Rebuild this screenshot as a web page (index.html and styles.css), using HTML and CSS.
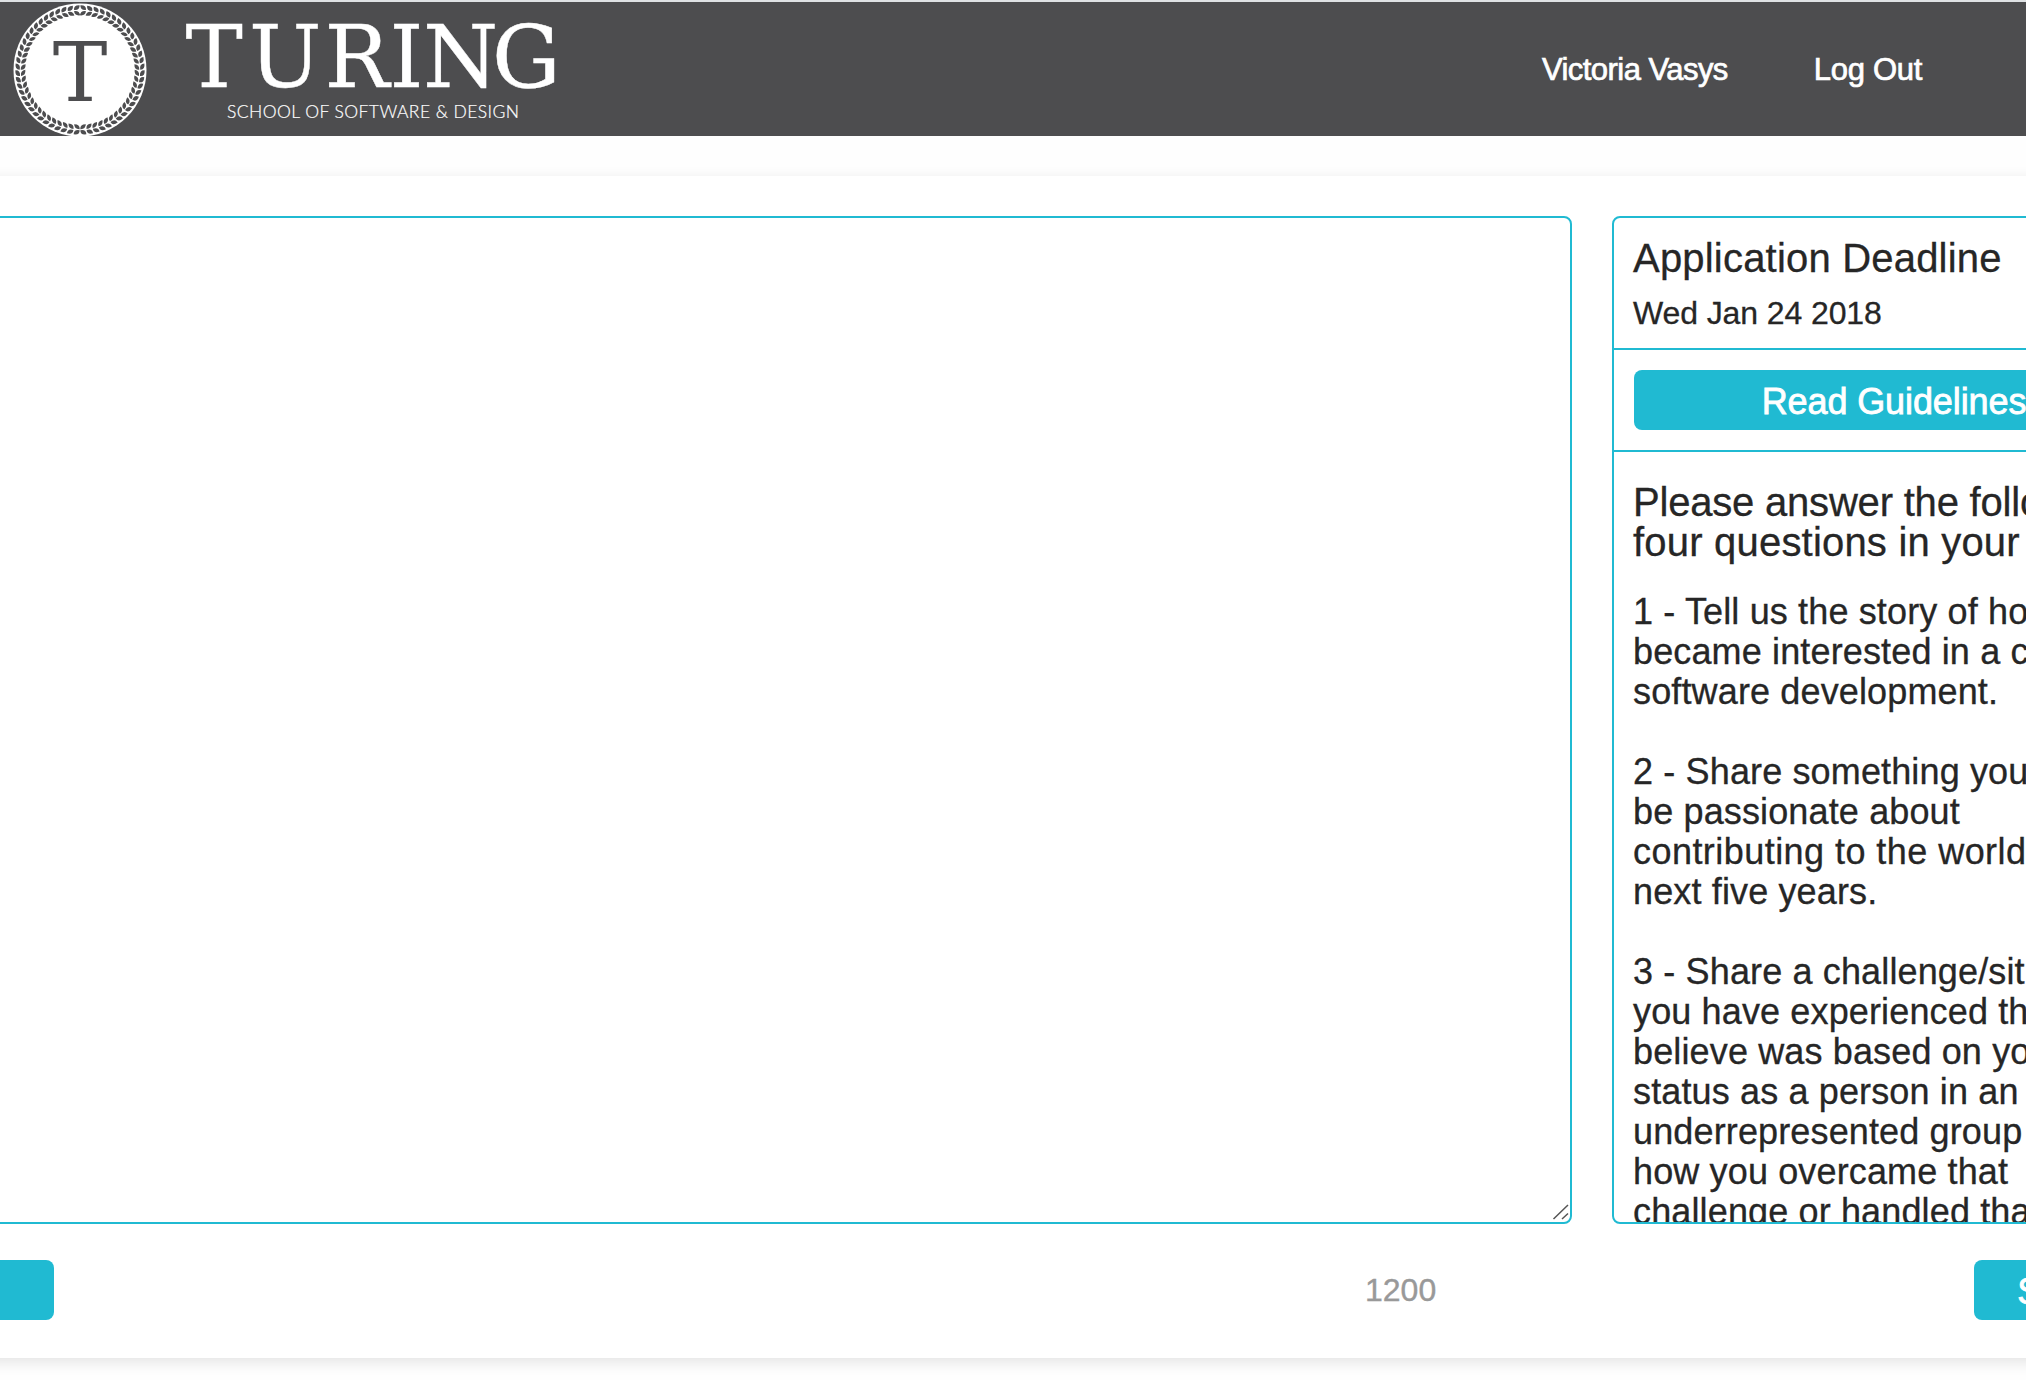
FILE: index.html
```html
<!DOCTYPE html>
<html lang="en">
<head>
<meta charset="utf-8">
<title>Turing Application</title>
<link rel="stylesheet" href="styles.css">
</head>
<body>
<header class="header">
  <svg class="logo" width="580" height="134" viewBox="0 2 580 134" role="img" aria-label="Turing School of Software &amp; Design">
    <defs>
      <g id="leaf"><path d="M2.800 -60.200Q-3 -59.400 -3 -64.600Q3.200 -65.200 2.800 -60.200zM2.800 -59.200Q2.800 -54.200 -3 -54.600Q-2.400 -59.800 2.800 -59.200z"/></g>
      <g id="sprig"><use href="#leaf"/><use href="#leaf" transform="rotate(6)"/><use href="#leaf" transform="rotate(12)"/><use href="#leaf" transform="rotate(18)"/><use href="#leaf" transform="rotate(24)"/></g>
      <g id="branch"><use href="#sprig"/><use href="#sprig" transform="rotate(30)"/><use href="#sprig" transform="rotate(60)"/><use href="#sprig" transform="rotate(90)"/><use href="#sprig" transform="rotate(120)"/><use href="#sprig" transform="rotate(150)"/></g>
    </defs>
    <circle cx="80" cy="70" r="66.500" fill="#fff"/>
    <g fill="#4d4d4f" transform="translate(80 70)"><use href="#branch" transform="rotate(3)"/><use href="#branch" transform="scale(-1 1) rotate(3)"/></g>
    <text class="mark" x="52.800" y="101">T</text>
    <text class="wordmark" x="185.500 249 324.500 389.500 423 492" y="87">TURING</text>
    <text class="tagline" x="227" y="117.500" textLength="292">SCHOOL OF SOFTWARE &amp; DESIGN</text>
  </svg>
  <nav class="nav"><a class="user">Victoria Vasys</a><a class="logout">Log Out</a></nav>
</header>
<main class="card">
  <div class="work">
    <div class="editor">
      <textarea class="essay"></textarea>
      <svg class="grip" width="18" height="16" viewBox="0 0 18 16"><path d="M1.500 15L16 1M10 15L16 9.500"/></svg>
    </div>
    <aside class="info">
      <section class="deadline"><h2>Application Deadline</h2><p>Wed Jan 24 2018</p></section>
      <section class="guide"><button class="button read">Read Guidelines</button></section>
      <section class="questions">
        <h3><span class="tight">Please answer the following</span><br>four questions in your essay</h3>
        <p>1 - Tell us the story of how you<br>became interested in a career in<br>software development.</p>
        <p>2 - Share something you would<br>be passionate about<br><span class="loose">contributing to the world in the</span><br>next five years.</p>
        <p>3 - Share a challenge/situation<br>you have experienced that you<br>believe was based on your<br>status as a person in an<br>underrepresented group and<br>how you overcame that<br>challenge or handled that</p>
      </section>
    </aside>
  </div>
  <footer class="actions"><button class="button back"></button><span class="count">1200</span><button class="button submit">Submit</button></footer>
</main>
</body>
</html>
```
FILE: styles.css
```css
* { box-sizing: border-box; }
body { margin: 0; height: 1380px; overflow: hidden; background: #fefefe; color: #262626; font-family: "Liberation Sans", Arial, sans-serif; }
h2, h3, p { margin: 0; font-weight: 400; white-space: nowrap; }
.header { display: flex; justify-content: space-between; height: 136px; border-top: 2px solid #dfe2e4; background: #4d4d4f; }
.logo { display: block; flex: none; }
.mark { font: 82px "DejaVu Serif", serif; fill: #4d4d4f; }
.wordmark { font: 86px "DejaVu Serif", serif; fill: #fff; stroke: #fff; stroke-width: .4px; }
.tagline { font: 300 17.5px Lato, sans-serif; fill: #fff; stroke: #fff; stroke-width: .2px; }
.nav { display: flex; align-items: center; gap: 86px; padding: 2px 104px 0 0; color: #fff; font-size: 31px; -webkit-text-stroke: .7px #fff; white-space: nowrap; }
.user { letter-spacing: -.55px; }
.logout { letter-spacing: -.3px; }
.card { height: 1182px; margin: 40px -30px 0; padding: 40px 30px 0; background: #fff; box-shadow: 0 4px 14px rgba(0, 0, 0, .11); }
.work { display: flex; gap: 40px; height: 1008px; }
.editor { position: relative; flex: none; width: 1572px; }
.essay { display: block; width: 1582px; height: 1008px; margin-left: -10px; border: 2px solid #20bad2; border-radius: 8px; background: #fff; resize: none; outline: 0; }
.grip { position: absolute; right: 2px; bottom: 4px; fill: none; stroke: #555; stroke-width: 1.5; }
.info { flex: none; width: 480px; height: 1008px; overflow: hidden; border: 2px solid #20bad2; border-radius: 8px; -webkit-text-stroke: .3px #262626; }
.deadline { height: 132px; padding: 17px 20px 0 19px; border-bottom: 2px solid #20bad2; }
.deadline h2 { font-size: 40px; line-height: 46px; letter-spacing: .2px; }
.deadline p { margin-top: 14px; font-size: 32px; line-height: 36px; letter-spacing: -.1px; }
.guide { height: 102px; padding: 20px; border-bottom: 2px solid #20bad2; }
.button { display: block; height: 60px; padding: 3px 0 0; border: 0; border-radius: 8px; background: #20bad2; color: #fff; font: 36px "Liberation Sans", Arial, sans-serif; letter-spacing: -.1px; -webkit-text-stroke: .8px #fff; white-space: nowrap; }
.read { width: 520px; }
.questions { padding: 30px 20px 0 19px; }
.questions h3 { margin-bottom: 30px; font-size: 40px; line-height: 40px; letter-spacing: .2px; }
.questions h3 .tight { letter-spacing: -.2px; }
.questions p { margin-bottom: 40px; font-size: 36px; line-height: 40px; letter-spacing: .14px; }
.questions .loose { letter-spacing: .45px; }
.actions { display: flex; align-items: center; height: 60px; margin-top: 36px; }
.back { width: 64px; margin-left: -10px; }
.count { margin-left: 1311px; padding-top: 1px; color: #999; font-size: 32px; -webkit-text-stroke: .4px #999; }
.submit { width: 198px; margin-left: auto; margin-right: -146px; }
```
